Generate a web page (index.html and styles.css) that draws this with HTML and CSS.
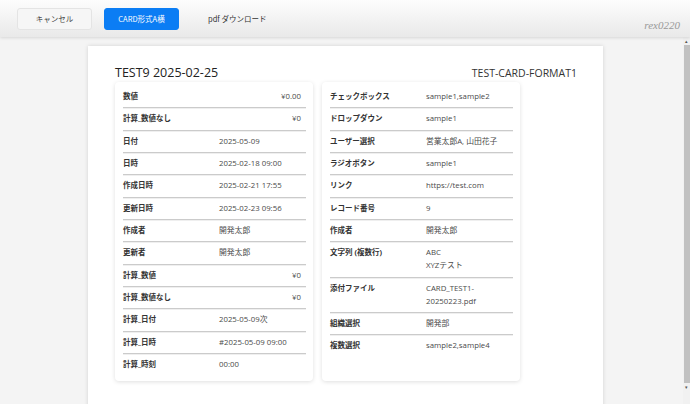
FILE: index.html
```html
<!DOCTYPE html>
<html lang="ja">
<head>
    <meta charset="UTF-8">
    <meta name="viewport" content="width=device-width, initial-scale=1.0">
    <title>TEST9 2025-02-25</title>
    <link rel="stylesheet" href="styles.css">
</head>
<body>
    <header class="toolbar">
        <button class="btn btn-cancel">キャンセル</button>
        <button class="btn btn-primary">CARD形式A横</button>
        <button class="btn btn-link">pdf ダウンロード</button>
        <span class="brand">rex0220</span>
    </header>

    <div class="viewport">
        <main class="scroll-area">
            <div class="paper">
                <div class="paper-head">
                    <h1 class="record-title">TEST9 2025-02-25</h1>
                    <span class="format-name">TEST-CARD-FORMAT1</span>
                </div>

                <div class="cards">
                    <div class="card">
                        <div class="row"><span class="label">数値</span><span class="value num">¥0.00</span></div>
                        <div class="row"><span class="label">計算_数値なし</span><span class="value num">¥0</span></div>
                        <div class="row"><span class="label">日付</span><span class="value">2025-05-09</span></div>
                        <div class="row"><span class="label">日時</span><span class="value">2025-02-18 09:00</span></div>
                        <div class="row"><span class="label">作成日時</span><span class="value">2025-02-21 17:55</span></div>
                        <div class="row"><span class="label">更新日時</span><span class="value">2025-02-23 09:56</span></div>
                        <div class="row"><span class="label">作成者</span><span class="value">開発太郎</span></div>
                        <div class="row"><span class="label">更新者</span><span class="value">開発太郎</span></div>
                        <div class="row"><span class="label">計算_数値</span><span class="value num">¥0</span></div>
                        <div class="row"><span class="label">計算_数値なし</span><span class="value num">¥0</span></div>
                        <div class="row"><span class="label">計算_日付</span><span class="value">2025-05-09次</span></div>
                        <div class="row"><span class="label">計算_日時</span><span class="value">#2025-05-09 09:00</span></div>
                        <div class="row"><span class="label">計算_時刻</span><span class="value">00:00</span></div>
                    </div>

                    <div class="card">
                        <div class="row"><span class="label">チェックボックス</span><span class="value">sample1,sample2</span></div>
                        <div class="row"><span class="label">ドロップダウン</span><span class="value">sample1</span></div>
                        <div class="row"><span class="label">ユーザー選択</span><span class="value">営業太郎A, 山田花子</span></div>
                        <div class="row"><span class="label">ラジオボタン</span><span class="value">sample1</span></div>
                        <div class="row"><span class="label">リンク</span><span class="value">https://test.com</span></div>
                        <div class="row"><span class="label">レコード番号</span><span class="value">9</span></div>
                        <div class="row"><span class="label">作成者</span><span class="value">開発太郎</span></div>
                        <div class="row"><span class="label">文字列 (複数行)</span><span class="value">ABC<br>XYZテスト</span></div>
                        <div class="row"><span class="label">添付ファイル</span><span class="value">CARD_TEST1-<br>20250223.pdf</span></div>
                        <div class="row"><span class="label">組織選択</span><span class="value">開発部</span></div>
                        <div class="row"><span class="label">複数選択</span><span class="value">sample2,sample4</span></div>
                    </div>
                </div>
            </div>
        </main>

        <div class="scrollbar">
            <span class="arrow">▴</span>
            <div class="thumb"></div>
            <span class="arrow">▾</span>
        </div>
    </div>
</body>
</html>
```

FILE: styles.css
```css
html, body {
    height: 100%;
}

body {
    font-family: "Open Sans", "Noto Sans CJK JP", sans-serif;
    margin: 0;
    padding: 0;
    background-color: #f4f4f4;
    color: #333;
    overflow: hidden;
    display: flex;
    flex-direction: column;
}

/* ツールバー */
.toolbar {
    height: 37px;
    flex: none;
    display: flex;
    align-items: center;
    padding: 0 8px 0 17px;
    background: linear-gradient(#fdfdfd, #e9e9e9);
    box-shadow: 0 1px 3px rgba(0, 0, 0, 0.12);
    position: relative;
    z-index: 1;
}

.btn {
    font-family: "Noto Sans CJK JP", sans-serif;
    font-size: 7.5px;
    height: 22px;
    width: 75px;
    padding: 0;
    margin-right: 12px;
    border-radius: 3px;
    border: 1px solid #e4e4e4;
    background-color: #f6f6f6;
    color: #444;
    cursor: pointer;
}

.btn-primary {
    background-color: #0b7df4;
    border-color: #0b7df4;
    color: #fff;
}

.btn-link {
    background: none;
    border: none;
    width: auto;
    margin-left: 17px;
    color: #333;
}

.brand {
    margin-left: auto;
    margin-top: 13px;
    margin-right: 2px;
    font-family: "Liberation Serif", serif;
    font-style: italic;
    font-size: 11px;
    color: #999;
}

/* 表示領域 */
.viewport {
    flex: 1;
    display: flex;
    min-height: 0;
}

.scroll-area {
    flex: 1;
    overflow: hidden;
    padding-left: 8px;
}

.scrollbar {
    width: 7px;
    flex: none;
    display: flex;
    flex-direction: column;
    align-items: center;
    background-color: #f1f1f1;
}

.scrollbar .arrow {
    font-size: 5px;
    line-height: 8px;
    height: 8px;
    color: #555;
}

.thumb {
    width: 6px;
    height: 338px;
    background-color: #c1c1c1;
}

/* 帳票 */
.paper {
    width: 515px;
    box-sizing: border-box;
    margin: 9px auto 0;
    min-height: 400px;
    padding: 17px 26px 0 27px;
    background-color: #fff;
    box-shadow: 0 0 4px rgba(0, 0, 0, 0.14);
}

.paper-head {
    display: flex;
    justify-content: space-between;
    align-items: center;
    height: 19px;
}

.record-title {
    margin: 0;
    font-size: 12.5px;
    font-weight: normal;
    color: #222;
}

.format-name {
    font-size: 10.5px;
    color: #333;
}

.cards {
    display: flex;
    gap: 9px;
    align-items: stretch;
}

.card {
    width: 198px;
    box-sizing: border-box;
    padding: 4px 7px 6px 8px;
    border-radius: 4px;
    background-color: #fff;
    box-shadow: 0 1px 4px rgba(0, 0, 0, 0.13);
}

.row {
    display: grid;
    grid-template-columns: 96px 1fr;
    padding: 4px 0 4.33px;
    line-height: 13px;
    font-size: 7.5px;
    border-bottom: 1px solid #cbcbcb;
    box-shadow: 0 1px 0 #efefef;
}

.row:last-child {
    border-bottom: none;
    box-shadow: none;
}

.label {
    font-weight: bold;
    color: #333;
}

.value {
    font-size: 7.8px;
    color: #4a4a4a;
}

.value.num {
    text-align: right;
    padding-right: 5px;
}
```
